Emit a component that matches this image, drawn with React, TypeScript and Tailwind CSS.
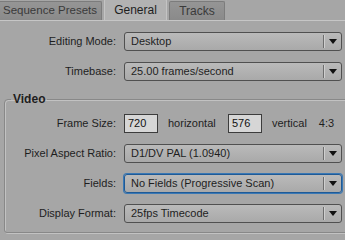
function Select({ value, focused = false }: { value: string; focused?: boolean }) {
  return (
    <div
      className={
        "flex h-[19px] w-[218px] items-center rounded-[3px] border bg-gradient-to-b from-[#bababa] to-[#a9a9a9] " +
        (focused
          ? "border-[#1f5a96] shadow-[0_0_0_1px_#3a78b4]"
          : "border-[#505050]")
      }
    >
      <span className="flex-1 pl-[6px] text-[#1e1e1e]">{value}</span>
      <div className="h-[13px] w-px bg-[#6e6e6e] shadow-[1px_0_0_#cfcfcf]" />
      <div className="flex w-[17px] justify-center">
        <svg width="8" height="5" viewBox="0 0 8 5">
          <path d="M0 0h8L4 5z" fill="#111" />
        </svg>
      </div>
    </div>
  );
}

function Row({ label, children }: { label: string; children: React.ReactNode }) {
  return (
    <div className="flex items-center">
      <div className="w-[116px] text-right text-[#1e1e1e]">{label}</div>
      <div className="ml-[8px]">{children}</div>
    </div>
  );
}

function NumBox({ value }: { value: string }) {
  return (
    <div className="flex h-[19px] w-[34px] items-center border border-[#3c3c3c] bg-[#d6d6d6] pl-[3px] text-[#111]">
      {value}
    </div>
  );
}

export default function App() {
  return (
    <div className="h-[240px] w-[345px] overflow-hidden bg-[#a6a6a6] text-[11px] font-['Liberation_Sans',Arial,sans-serif]">
      {/* tabs */}
      <div className="flex h-[21px] items-end gap-[2px] border-b border-[#c6c6c6]">
        <div className="ml-[-4px] flex h-[19px] w-[106px] shrink-0 items-center whitespace-nowrap rounded-t-[2px] border border-b-0 border-[#7c7c7c] bg-gradient-to-b from-[#959595] to-[#8a8a8a] pl-[6px] text-[11.5px] text-[#3a3a3a]">
          Sequence Presets
        </div>
        <div className="flex h-[21px] w-[63px] shrink-0 items-center justify-center rounded-t-[2px] border border-b-0 border-[#c4c4c4] bg-[#b2b2b2] text-[12px] text-[#1e1e1e]">
          General
        </div>
        <div className="flex h-[19px] w-[56px] shrink-0 items-center justify-center rounded-t-[2px] border border-b-0 border-[#7c7c7c] bg-gradient-to-b from-[#959595] to-[#8a8a8a] text-[12px] text-[#3a3a3a]">
          Tracks
        </div>
      </div>

      <div className="mt-[11px] flex flex-col gap-[11px]">
        <Row label="Editing Mode:">
          <Select value="Desktop" />
        </Row>
        <Row label="Timebase:">
          <Select value="25.00 frames/second" />
        </Row>
      </div>

      <fieldset className="ml-[4px] mr-[-10px] mt-[9px] h-[143px] rounded-tl-[4px] rounded-bl-[3px] border border-[#888] shadow-[inset_1px_1px_0_#c2c2c2,1px_1px_0_#c2c2c2]">
        <legend className="ml-[6px] px-[2px] text-[12px] font-bold text-[#1e1e1e]">Video</legend>
        <div className="ml-[-5px] mt-[6px] flex flex-col gap-[11px]">
          <Row label="Frame Size:">
            <div className="flex items-center text-[#1e1e1e]">
              <NumBox value="720" />
              <span className="ml-[10px] w-[60px]">horizontal</span>
              <NumBox value="576" />
              <span className="ml-[10px]">vertical</span>
              <span className="ml-[12px]">4:3</span>
            </div>
          </Row>
          <Row label="Pixel Aspect Ratio:">
            <Select value="D1/DV PAL (1.0940)" />
          </Row>
          <Row label="Fields:">
            <Select value="No Fields (Progressive Scan)" focused />
          </Row>
          <Row label="Display Format:">
            <Select value="25fps Timecode" />
          </Row>
        </div>
      </fieldset>
    </div>
  );
}
